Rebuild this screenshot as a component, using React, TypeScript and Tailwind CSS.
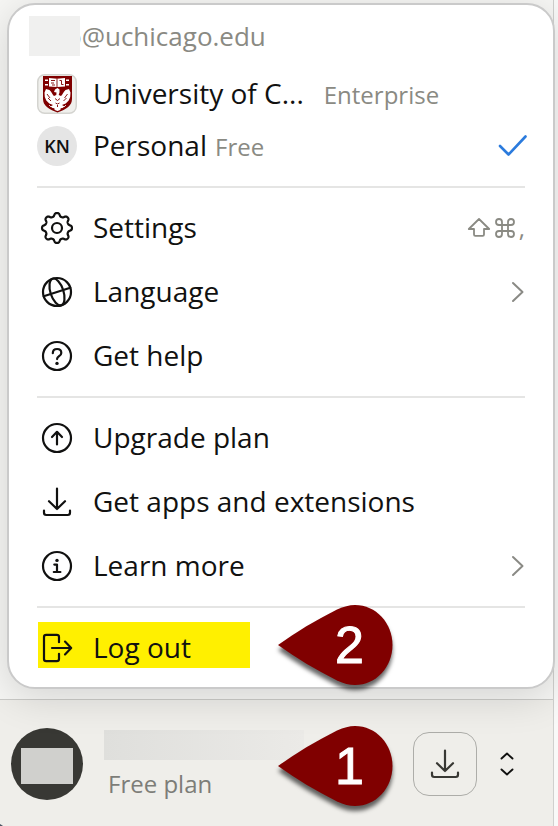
import type { ReactNode } from "react";
import { Command } from "lucide-react";

function Icon({ children, className = "" }: { children: ReactNode; className?: string }) {
  return (
    <svg
      viewBox="0 0 32 32"
      fill="none"
      stroke="currentColor"
      strokeWidth={2.2}
      strokeLinecap="round"
      strokeLinejoin="round"
      aria-hidden="true"
      className={`size-8 shrink-0 overflow-visible ${className}`}
    >
      {children}
    </svg>
  );
}

// Eight-lobed gear outline, sampled around the circle
const gearPoints = Array.from({ length: 192 }, (_, i) => {
  const a = (i / 192) * Math.PI * 2;
  const r = 13.4 + 1.7 * Math.tanh(1.6 * Math.cos(8 * a));
  return `${(16 + r * Math.cos(a)).toFixed(2)},${(16 + r * Math.sin(a)).toFixed(2)}`;
}).join(" ");

const GearIcon = () => (
  <Icon>
    <polygon points={gearPoints} />
    <circle cx="16" cy="16" r="5" />
  </Icon>
);

const GlobeIcon = () => (
  <Icon>
    <circle cx="16" cy="16" r="14" />
    <g transform="rotate(-18 16 16)">
      <ellipse cx="16" cy="16" rx="6.5" ry="14" />
      <path d="M2 16h28" />
    </g>
  </Icon>
);

const HelpIcon = () => (
  <Icon>
    <circle cx="16" cy="16" r="14" />
    <path d="M11.8 13.2c0-2.6 1.8-4.2 4.3-4.2s4.2 1.6 4.2 3.9c0 3.2-4.2 3.4-4.2 6.2" />
    <circle cx="16" cy="23.4" r="1.7" fill="currentColor" stroke="none" />
  </Icon>
);

const UpgradeIcon = () => (
  <Icon>
    <circle cx="16" cy="16" r="14" />
    <path d="M16 22.5V10M11 15l5-5.2 5 5.2" />
  </Icon>
);

const DownloadIcon = () => (
  <Icon>
    <path d="M16 2.5V23M8 15.2l8 7.8 8-7.8M3 24.5v2.3c0 1.2.9 2.2 2.2 2.2h21.6c1.3 0 2.2-1 2.2-2.2v-2.3" />
  </Icon>
);

const InfoIcon = () => (
  <Icon>
    <circle cx="16" cy="16" r="14" />
    <path d="M13.3 14.6H16v7.2M12.8 22h6.6" />
    <circle cx="16" cy="10.4" r="1.7" fill="currentColor" stroke="none" />
  </Icon>
);

const LogoutIcon = () => (
  <Icon>
    <path d="M18 10.2V5c0-1.4-.8-2.2-2.2-2.2H5.2C3.8 2.8 3 3.6 3 5v22c0 1.4.8 2.2 2.2 2.2h10.6c1.4 0 2.2-.8 2.2-2.2v-5.2M11 16h19M24 9.6l6.2 6.4-6.2 6.4" />
  </Icon>
);

const ChevronIcon = () => (
  <svg viewBox="0 0 14 24" className="h-6 w-3.5 text-[#8a8a85]" fill="none" stroke="currentColor" strokeWidth={2} strokeLinecap="round" strokeLinejoin="round" aria-hidden="true">
    <path d="M2 3l9.5 9L2 21" />
  </svg>
);

const ShieldLogo = () => (
  <svg viewBox="0 0 40 40" className="size-10 shrink-0" aria-hidden="true">
    <rect x="0.75" y="0.75" width="38.5" height="38.5" rx="7" fill="#f0f0ed" stroke="#d4d4d0" strokeWidth="1.5" />
    <path d="M6 2h29v23c0 6.5-5.5 10.5-14.5 13.5C11.5 35.500 6 31.500 6 25z" fill="#800000" />
    {/* book */}
    <path d="M12 4l8 .8 8-.8v8.500l-8 .5-8-.5zM8 5.500h3V7H8zM8 10h3v1.500H8zM29 5.500h3V7h-3zM29 10h3v1.500h-3z" fill="#fff" />
    {/* phoenix */}
    <path
      d="M18 15.500l2.500-1.500 2 1.500v3l-.8 2.500 2.300 1c1.500-1 2-3.500 4.500-6l3.500-1 1.500 3.500-.3 4.500-1.500 3.500-3 3-3.700 1.500 2.500 1.500-2 1.500-2 .2-.8 2-2.200.8-2.200-.8-.8-2-2-.2-2-1.500 2.500-1.500-3.700-1.500-3-3-1.500-3.500L7.500 18.500 9 15l3.500 1c2.500 2.500 3 5 4.500 6l2.300-1 .2-2.500-2.500-.5z"
      fill="#fff"
    />
    <path
      d="M20 4.500V13M14 6.500h4M14 9h3M15 11h3M22.500 6.500h2v4h2M10 20l3 4M11 24l3 3M30.500 20l-3 4M29.500 24l-3 3M18 24.500l2.500 2 2.500-2M18.500 29l2 1 2-1M20.500 31v2"
      stroke="#800000"
      strokeWidth="0.9"
      fill="none"
    />
    <path d="M12 31l2 2M29 31l-2 2M17 35h2M22 35h2" stroke="#fff" strokeWidth="0.8" />
  </svg>
);

interface MenuItemProps {
  icon: ReactNode;
  label: string;
  trailing?: ReactNode;
  highlighted?: boolean;
}

function MenuItem({ icon, label, trailing, highlighted = false }: MenuItemProps) {
  return (
    <button type="button" role="menuitem" className="relative flex h-16 w-full items-center gap-4 text-left">
      {highlighted && <span className="absolute top-1.5 left-px h-[46px] w-[212px] bg-[#fff000]" />}
      <span className="relative flex w-10 justify-center">{icon}</span>
      <span className="relative flex-1 pb-0.5 whitespace-nowrap">{label}</span>
      {trailing}
    </button>
  );
}

const Divider = () => <hr className="my-2 border-0 border-t-2 border-[#e5e5e4]" />;

// Red teardrop pointing left, with the step number in it
function StepMarker({ step, className }: { step: number; className: string }) {
  return (
    <div className={`pointer-events-none absolute z-20 h-[82px] w-[115px] ${className}`}>
      <svg viewBox="0 0 115 82" className="absolute inset-0 size-full overflow-visible drop-shadow-[0_5px_2px_rgba(0,0,0,0.6)]" aria-hidden="true">
        <path d="M0 41C18 28 38 16 59 5.5 66 2.5 71 1 77 1c21 0 37.5 18 37.5 40S98 81 77 81c-6 0-11-1.5-18-4.5C38 66 18 54 0 41z" fill="#800000" />
      </svg>
      <span className="relative flex h-full items-center justify-center pl-7 font-['Liberation_Sans',sans-serif] text-[52px] leading-none text-white [-webkit-text-stroke:1px_white]">
        {step}
      </span>
    </div>
  );
}

export default function App() {
  return (
    <div className="flex min-h-screen bg-[#f9f9f8] font-['Open_Sans',sans-serif] text-[28px] leading-9 text-[#111110]">
      <aside className="relative flex min-w-0 flex-1 flex-col border-r border-[#d0d0ce] bg-[#f6f6f4]">
        <div
          role="menu"
          className="relative z-10 mt-[3px] -mr-0.5 ml-[7px] rounded-[28px] border-2 border-[#cacaca] bg-white px-7 pb-[7px] shadow-[0_8px_40px_rgba(0,0,0,0.14)]"
        >
          <div className="-ml-2 flex h-[63px] items-center pb-0.5 text-[26px] font-medium text-[#8a8a83]">
            <span className="relative z-10 h-10 w-[51px] bg-[#f0f0ef]" />
            <span className="-ml-3.5">o@uchicago.edu</span>
          </div>

          <button type="button" role="menuitem" className="flex h-13 w-full items-center gap-4 text-left">
            <ShieldLogo />
            <span className="flex items-baseline gap-5 pb-0.5 whitespace-nowrap">
              University of C...
              <span className="text-2xl text-[#8a8a83]">Enterprise</span>
            </span>
          </button>
          <button type="button" role="menuitem" className="flex h-13 w-full items-center gap-4 text-left">
            <span className="flex size-10 items-center justify-center rounded-full bg-[#e5e5e5] text-lg font-semibold">KN</span>
            <span className="flex flex-1 items-baseline gap-2 pb-0.5 whitespace-nowrap">
              Personal
              <span className="text-2xl text-[#8a8a83]">Free</span>
            </span>
            <svg viewBox="0 0 28 24" className="h-6 w-7 overflow-visible" fill="none" stroke="#2b7bdd" strokeWidth={2.6} strokeLinecap="round" strokeLinejoin="round" aria-hidden="true">
              <path d="M3 12l8.5 8.5L28.5 2.5" />
            </svg>
          </button>
          <div className="pt-1.5">
            <Divider />
          </div>

          <MenuItem
            icon={<GearIcon />}
            label="Settings"
            trailing={
              <span className="flex items-center gap-0.5 text-2xl text-[#8a8a83]">
                <svg viewBox="0 0 24 24" className="size-6" fill="none" stroke="currentColor" strokeWidth={1.8} strokeLinejoin="round" aria-hidden="true">
                  <path d="M12 3L1.8 13H7v5.5c0 .8.5 1.3 1.3 1.3h7.4c.8 0 1.3-.5 1.3-1.3V13h5.2z" />
                </svg>
                <Command size={24} strokeWidth={1.8} />
                ,
              </span>
            }
          />
          <MenuItem icon={<GlobeIcon />} label="Language" trailing={<ChevronIcon />} />
          <MenuItem icon={<HelpIcon />} label="Get help" />
          <Divider />
          <MenuItem icon={<UpgradeIcon />} label="Upgrade plan" />
          <MenuItem icon={<DownloadIcon />} label="Get apps and extensions" />
          <MenuItem icon={<InfoIcon />} label="Learn more" trailing={<ChevronIcon />} />
          <Divider />
          <div className="relative">
            <MenuItem icon={<LogoutIcon />} label="Log out" highlighted />
            <StepMarker step={2} className="-top-3 left-[241px]" />
          </div>
        </div>

        <footer className="relative mt-2.5 flex flex-1 items-start border-t border-[#cbcbc8] bg-[#efeeea] py-7 pr-10 pl-[11px]">
          <div className="flex size-18 shrink-0 items-center justify-center rounded-full bg-[#383834]">
            <span className="mt-1 h-9 w-[52px] bg-[#d0d0cd]" />
          </div>
          <div className="ml-[21px] flex-1 pt-0.5">
            <div className="h-[30px] w-[200px] bg-linear-to-r from-[#dfdfdc] to-[#ebeae7]" />
            <p className="mt-2 px-1 text-2xl text-[#7d7d78]">Free plan</p>
          </div>
          <div className="flex h-18 items-center gap-6">
            <button type="button" aria-label="Download apps" className="flex size-16 items-center justify-center rounded-2xl border border-[#adada9] text-[#383834]">
              <DownloadIcon />
            </button>
            <button type="button" aria-label="Open account menu">
              <svg viewBox="0 0 12 24" className="h-6 w-3 overflow-visible" fill="none" stroke="#111110" strokeWidth={1.9} strokeLinecap="round" strokeLinejoin="round" aria-hidden="true">
                <path d="M.5 6.500L6 1.500l5.500 5M.5 17.500L6 22.500l5.500-5" />
              </svg>
            </button>
          </div>
          <StepMarker step={1} className="top-[25px] left-[278px]" />
          {/* rounded window corner */}
          <svg viewBox="0 0 8 4" className="absolute bottom-0 left-0 h-1 w-2" aria-hidden="true">
            <path d="M0 0c2 1.500 4.500 3 8 4H0z" fill="#4b5563" />
          </svg>
        </footer>
      </aside>
      <div className="w-1 shrink-0" />
    </div>
  );
}
